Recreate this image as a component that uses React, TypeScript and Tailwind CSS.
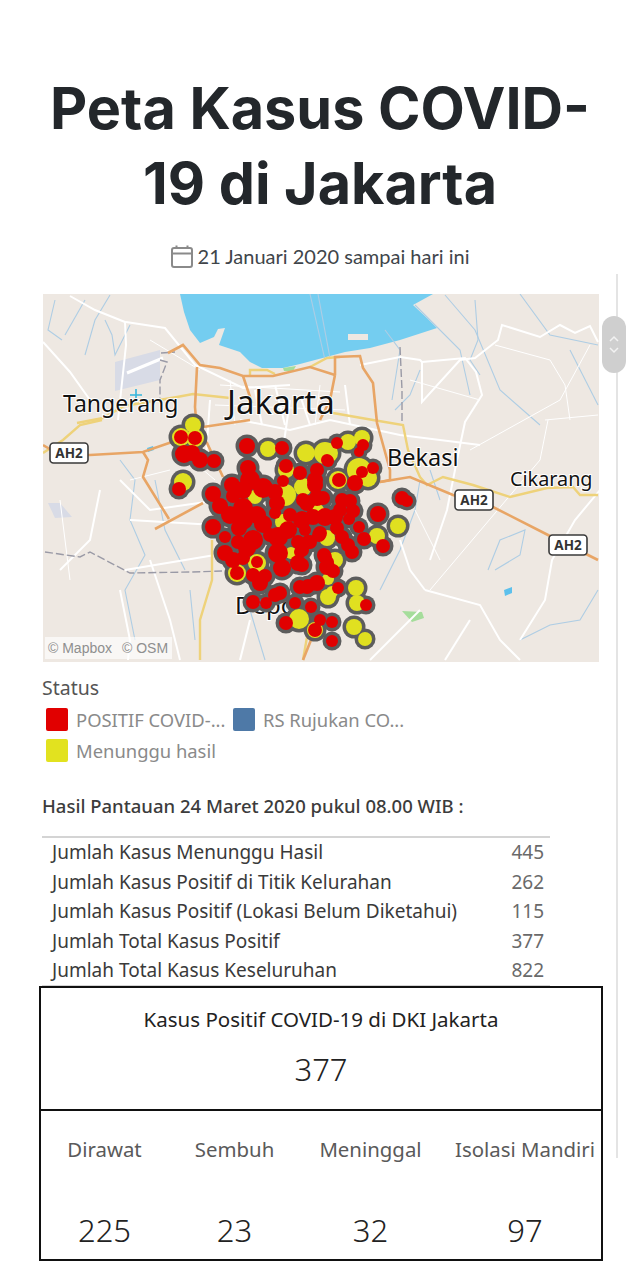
import React from "react";

// [cx, cy, r] in page pixels, the map's viewBox uses the same numbers
const yellowDots = [
  [193, 425, 8], [181, 437, 9], [195, 438, 9], [183, 482, 9], [268, 449, 8], [306, 453, 9],
  [286, 470, 8], [285, 495, 11], [303, 487, 9], [255, 497, 7], [283, 522, 8], [291, 553, 6],
  [237, 573, 9], [257, 563, 9], [327, 538, 8], [325, 453, 11], [328, 453, 10],
  [348, 442, 8], [362, 438, 8], [359, 470, 12], [368, 478, 9], [338, 480, 9], [377, 536, 8],
  [398, 526, 8], [335, 560, 8], [328, 579, 6], [328, 597, 8], [332, 592, 6], [356, 588, 8],
  [357, 603, 8], [299, 619, 10], [354, 627, 8], [365, 639, 7], [315, 630, 8], [318, 510, 6],
];

const redDots = [
  [181, 437, 7], [195, 438, 7], [184, 454, 9], [192, 453, 8], [200, 460, 8], [214, 461, 7],
  [179, 489, 7], [247, 446, 8], [282, 448, 7], [213, 494, 8], [232, 485, 8], [248, 468, 8],
  [250, 480, 10], [263, 488, 10], [243, 490, 9], [233, 496, 7], [220, 506, 8], [230, 515, 9],
  [243, 508, 10], [243, 520, 10], [257, 515, 9], [263, 524, 9], [239, 528, 8], [213, 527, 8],
  [225, 537, 6], [238, 542, 7], [253, 540, 10], [247, 548, 9], [225, 553, 8], [233, 560, 8],
  [243, 558, 7], [237, 573, 7], [257, 562, 6], [253, 575, 7], [265, 576, 7], [260, 583, 8],
  [275, 492, 8], [277, 503, 8], [275, 513, 6], [283, 481, 6], [286, 466, 7], [300, 473, 7],
  [278, 537, 10], [288, 530, 9], [278, 553, 10], [282, 568, 9], [298, 563, 8], [300, 552, 6],
  [298, 542, 7], [308, 542, 7], [319, 535, 7], [302, 520, 9], [313, 517, 8], [325, 517, 9],
  [307, 503, 8], [317, 498, 8], [315, 480, 8], [317, 470, 7], [327, 460, 6], [325, 557, 7],
  [327, 567, 8], [280, 593, 7], [275, 595, 7], [300, 587, 7], [317, 583, 8], [308, 586, 7],
  [253, 602, 7], [266, 603, 6], [295, 603, 6], [311, 607, 6], [286, 623, 7], [320, 620, 6],
  [315, 630, 7], [337, 443, 6], [363, 445, 6], [359, 452, 5], [328, 461, 6], [339, 480, 7],
  [373, 468, 6], [362, 472, 6], [355, 483, 8], [315, 485, 8], [303, 500, 7], [323, 498, 7],
  [342, 500, 7], [350, 501, 7], [353, 511, 7], [349, 519, 6], [335, 517, 8], [337, 528, 7],
  [342, 537, 7], [348, 545, 7], [352, 552, 7], [359, 527, 6], [364, 539, 7], [383, 546, 7],
  [378, 514, 8], [402, 498, 7], [407, 501, 6], [320, 533, 7], [310, 542, 7], [302, 550, 7],
  [302, 565, 7], [324, 555, 7], [328, 562, 6], [333, 571, 7], [307, 587, 7], [338, 588, 6],
  [366, 605, 6], [332, 622, 6], [332, 641, 6], [290, 515, 7], [270, 535, 7], [340, 510, 7],
  [305, 530, 6],
];

const orangeRoads = [
  "M168 353L183 345L200 365L220 368L243 376L273 376L310 367L335 375",
  "M335 375L335 357L360 356L363 368L373 383L377 423L390 470L390 480L380 482",
  "M197 367L195 407L197 430L207 443L223 477",
  "M243 376L252 403",
  "M335 375L330 400L320 420",
  "M43 445L60 455L90 455L143 452L172 442",
  "M143 452L148 460L143 477L169 519",
  "M155 529L203 503",
  "M203 427L250 420",
  "M380 482L410 477L453 495L493 507L548 535L598 560",
  "M303 660L311 640",
];

const yellowRoads = [
  "M43 453L63 440L80 425L102 420",
  "M77 423L103 418L124 406L177 397L193 394L230 398",
  "M333 413L373 420L403 425L408 450L420 477L427 485L443 477L473 485L510 497L547 488L573 487L580 495L598 495",
  "M212 540L212 580L200 620L200 660",
  "M307 637L303 660",
  "M250 376L250 370L267 370L275 374",
  "M310 367L327 358L340 357",
];

const whiteRoads = [
  "M70 296L95 310L125 322L126 345L118 420",
  "M126 322L165 328L195 365L243 388L290 385",
  "M43 342L70 372L90 400",
  "M360 365L400 357L420 360L422 362L422 402L460 360L475 358L498 340L502 325L540 337L560 325L575 333L590 326L598 342",
  "M422 362L465 358L476 372L482 395L465 422L457 460L447 510L430 560",
  "M240 420L290 430L330 420L400 435L480 445",
  "M290 400L280 470",
  "M210 400L205 470",
  "M255 390L262 425",
  "M275 385L285 425",
  "M300 395L310 425",
  "M345 385L350 425",
  "M100 490L90 540L60 570",
  "M120 480L150 510L220 500",
  "M130 520L215 525",
  "M125 570L215 555",
  "M150 560L170 620L180 660",
  "M120 590L130 640L128 660",
  "M425 590L480 605L500 640L520 660",
  "M520 640L545 600L552 560L575 520L600 490",
  "M425 590L410 570L400 540",
  "M445 660L470 620",
  "M240 660L250 620",
  "M370 660L420 610",
];

const thinWhite = [
  "M470 450L560 400L590 345",
  "M430 590L540 460L548 420",
  "M495 345L550 360L565 385L570 420",
  "M60 500L70 580",
  "M180 450L215 480",
  "M415 510L440 560",
  "M130 480L170 470",
  "M150 340L200 370",
  "M545 420L598 415",
  "M410 380L480 400",
  "M220 385L340 392",
  "M215 405L345 410",
  "M230 380L235 425",
  "M320 385L315 425",
];

const rivers = [
  "M55 300L48 330L62 340",
  "M85 300L65 335",
  "M110 295L95 320L85 355",
  "M105 320L112 335L115 355L130 325",
  "M415 305L460 350L470 395",
  "M445 295L475 330L500 390L540 425",
  "M475 300L478 340L470 360L480 375",
  "M520 294L550 335L598 345",
  "M570 350L598 405",
  "M310 294L325 360",
  "M318 294L330 358",
  "M385 330L400 350L392 400",
  "M420 370L410 395L395 410",
  "M120 460L135 480L130 520L145 555L125 590L135 640",
  "M155 480L165 530L185 570",
  "M495 570L520 555L525 530L500 540L488 570",
  "M520 640L550 625L580 620L598 590",
  "M380 590L400 550L415 510L420 480",
  "M250 610L265 660",
  "M190 590L195 640",
  "M430 470L440 500",
];

function Shield({ x, y }: { x: number; y: number }) {
  return (
    <g>
      <rect x={x} y={y} width="38" height="20" rx="3.5" fill="#fff" stroke="#3a3a3a" strokeWidth="1.6" />
      <text
        x={x + 19}
        y={y + 15}
        textAnchor="middle"
        fontSize="13.5"
        fontWeight="700"
        fill="#333"
        fontFamily="'Noto Sans', sans-serif"
      >
        AH2
      </text>
    </g>
  );
}

function MapLabel({ x, y, size, children }: { x: number; y: number; size: number; children: string }) {
  return (
    <text
      x={x}
      y={y}
      fontSize={size}
      fill="#111"
      stroke="#fff"
      strokeWidth="2"
      paintOrder="stroke"
      fontFamily="'Noto Sans', sans-serif"
    >
      {children}
    </text>
  );
}

function CovidMap() {
  return (
    <svg viewBox="43 294 556 368" className="block h-[368px] w-[556px]">
      <rect x="43" y="294" width="556" height="368" fill="#eee8e2" />
      <path
        d="M180 294L184 312L190 330L200 343L214 337L218 329L225 328L219 345L240 352L250 362L262 368L283 368L300 364L345 352L370 348L400 340L437 328L427 318L413 305L433 294Z"
        fill="#74cdf0"
      />
      <path d="M283 368L296 366L293 371L284 371Z" fill="#a5dd9b" />
      <rect x="348" y="334" width="20" height="6" fill="#eee8e2" />
      <path d="M115 391L115 362L160 350L160 380Z" fill="#d8dbe6" />
      <path d="M127 373L163 358" stroke="#fff" strokeWidth="3" fill="none" />
      <path d="M48 503L60 503L72 517L55 518Z" fill="#d8dbe6" />
      <path d="M402 611L422 612L424 618L412 622Z" fill="#a5dd9b" />
      <path d="M504 590L512 587L512 593L505 596Z" fill="#5cc0ec" />
      <path d="M147 448L153 446L154 450L148 452Z" fill="#5cc0ec" />
      {rivers.map((d) => (
        <path key={d} d={d} fill="none" stroke="#aecde4" strokeWidth="1.1" />
      ))}
      {thinWhite.map((d) => (
        <path key={d} d={d} fill="none" stroke="#fff" strokeWidth="1" />
      ))}
      {whiteRoads.map((d) => (
        <path key={d} d={d} fill="none" stroke="#fff" strokeWidth="2" />
      ))}
      <path
        d="M161 353L175 352M160 360L167 362L160 380L160 400M400 347L402 390L402 425M45 552L80 557L90 552L130 573L190 572L222 571"
        fill="none"
        stroke="#9a9aa6"
        strokeWidth="1.4"
        strokeDasharray="8 3"
      />
      {yellowRoads.map((d) => (
        <path key={d} d={d} fill="none" stroke="#eed27a" strokeWidth="2.4" />
      ))}
      {orangeRoads.map((d) => (
        <path key={d} d={d} fill="none" stroke="#e8a565" strokeWidth="2.6" />
      ))}
      <path d="M136 389L136 401M130 395L142 395" stroke="#35b5dc" strokeWidth="1.6" />
      <MapLabel x={63} y={412} size={23}>Tangerang</MapLabel>
      <MapLabel x={227} y={414} size={33}>Jakarta</MapLabel>
      <MapLabel x={387} y={466} size={23.5}>Bekasi</MapLabel>
      <MapLabel x={510} y={486} size={19.8}>Cikarang</MapLabel>
      <MapLabel x={235} y={614} size={24}>Depok</MapLabel>
      <Shield x={50} y={443} />
      <Shield x={455} y={490} />
      <Shield x={549} y={535} />
      {[...yellowDots, ...redDots].map(([cx, cy, r], i) => (
        <circle key={i} cx={cx} cy={cy} r={r + 3.5} fill="#5c5c5c" />
      ))}
      <path d="M258 600L268 598L268 604L258 605ZM330 450L336 448L336 458L330 458Z" fill="#4e79a7" />
      {yellowDots.map(([cx, cy, r], i) => (
        <circle key={i} cx={cx} cy={cy} r={r} fill="#e0e020" />
      ))}
      {redDots.map(([cx, cy, r], i) => (
        <circle key={i} cx={cx} cy={cy} r={r} fill="#e10000" />
      ))}
      <rect x="45" y="637" width="127" height="22" fill="#fff" fillOpacity="0.65" />
      <text x="48" y="653" fontSize="14" fill="#8f8f8f" fontFamily="'Liberation Sans', sans-serif">
        © Mapbox
      </text>
      <text x="122" y="653" fontSize="14" fill="#8f8f8f" fontFamily="'Liberation Sans', sans-serif">
        © OSM
      </text>
    </svg>
  );
}

const rows = [
  ["Jumlah Kasus Menunggu Hasil", "445"],
  ["Jumlah Kasus Positif di Titik Kelurahan", "262"],
  ["Jumlah Kasus Positif (Lokasi Belum Diketahui)", "115"],
  ["Jumlah Total Kasus Positif", "377"],
  ["Jumlah Total Kasus Keseluruhan", "822"],
];

const stats = [
  { label: "Dirawat", value: "225", cell: "" },
  { label: "Sembuh", value: "23", cell: "" },
  { label: "Meninggal", value: "32", cell: "" },
  { label: "Isolasi Mandiri", value: "97", cell: "pl-[9px]" },
];

export default function App() {
  return (
    <div className="relative h-[1268px] w-[640px] overflow-hidden bg-white font-['Noto_Sans',sans-serif]">
      {/* Heading */}
      <h1 className="px-[30px] pt-[71px] text-center font-['Inter',sans-serif] text-[57.5px] font-bold leading-[75px] text-[#23272b]">
        Peta Kasus COVID-
        <br />
        19 di Jakarta
      </h1>
      <div className="mt-[21px] flex h-[28px] items-center justify-center gap-[5px] font-['Lato',sans-serif] text-[20px] text-[#40454a]">
        <svg width="22" height="23" viewBox="0 0 22 23" fill="none" stroke="#8a8a8a" strokeWidth="2">
          <rect x="1" y="3" width="20" height="19" rx="2" />
          <path d="M1 8.5H21M5.5 0.5V4M16.5 0.5V4" />
        </svg>
        <span>21 Januari 2020 sampai hari ini</span>
      </div>

      {/* Map */}
      <div className="mt-[24px] px-[43px]">
        <CovidMap />
      </div>

      {/* Legend */}
      <div className="px-[42px] pt-[13px] text-[18.4px] text-[#555]">
        <div className="h-[25px] text-[19.5px] leading-[25px]">Status</div>
        <div className="mt-[4px] flex h-[31px] items-center pl-[4px] text-[#8a8a8a]">
          <span className="h-[23px] w-[22px] rounded-[2px] bg-[#e10000]" />
          <span className="ml-[8px] w-[157px] whitespace-nowrap">POSITIF COVID-...</span>
          <span className="h-[23px] w-[22px] rounded-[2px] bg-[#4e79a7]" />
          <span className="ml-[8px]">RS Rujukan CO...</span>
        </div>
        <div className="flex h-[31px] items-center pl-[4px] text-[#8a8a8a]">
          <span className="h-[23px] w-[22px] rounded-[2px] bg-[#e2e21f]" />
          <span className="ml-[8px]">Menunggu hasil</span>
        </div>
      </div>

      {/* Table */}
      <div className="px-[42px] pt-[27px]">
        <div className="h-[25px] whitespace-nowrap text-[18.5px] font-medium leading-[25px] text-[#3c3c3c]">
          Hasil Pantauan 24 Maret 2020 pukul 08.00 WIB :
        </div>
        <div className="mt-[18px] w-[508px] border-y-2 border-[#d4d4d4]">
          {rows.map(([label, value]) => (
            <div key={label} className="flex h-[29.4px] items-center justify-between pl-[10px] pr-[6px] text-[19px]">
              <span className="text-[#3a3a3a]">{label}</span>
              <span className="text-[#6a6a6a]">{value}</span>
            </div>
          ))}
        </div>
      </div>

      {/* Totals box */}
      <div className="relative mx-[39px] -mt-[1px] h-[275px] w-[564px] border-2 border-[#111] bg-white">
        <div className="flex h-[123px] flex-col items-center border-b-2 border-[#111]">
          <div className="mt-[16px] whitespace-nowrap text-[20.5px] leading-[30px] text-[#222]">
            Kasus Positif COVID-19 di DKI Jakarta
          </div>
          <div className="mt-[14px] text-[31px] font-light leading-[42px] text-[#222]">377</div>
        </div>
        <div className="grid grid-cols-[127px_133px_139px_1fr]">
          {stats.map((s) => (
            <div key={s.label} className={`flex flex-col items-center ${s.cell}`}>
              <div className="mt-[23px] whitespace-nowrap text-[20.4px] leading-[30px] text-[#5a5a5a]">{s.label}</div>
              <div className="mt-[44px] text-[31px] font-light leading-[44px] text-[#222]">{s.value}</div>
            </div>
          ))}
        </div>
      </div>

      {/* Scroll rail and handle */}
      <div className="absolute left-[616px] top-[274px] h-[884px] w-[2px] bg-[#e4e4e4]" />
      <div className="absolute left-[602px] top-[316px] flex h-[57px] w-[24px] flex-col items-center justify-center gap-[3px] rounded-[12px] bg-[#cfcfcf]">
        <svg width="12" height="8" viewBox="0 0 12 8" fill="none" stroke="#f2f2f2" strokeWidth="1.5">
          <path d="M2 6L6 2L10 6" />
        </svg>
        <svg width="12" height="8" viewBox="0 0 12 8" fill="none" stroke="#f2f2f2" strokeWidth="1.5">
          <path d="M2 2L6 6L10 2" />
        </svg>
      </div>
    </div>
  );
}
